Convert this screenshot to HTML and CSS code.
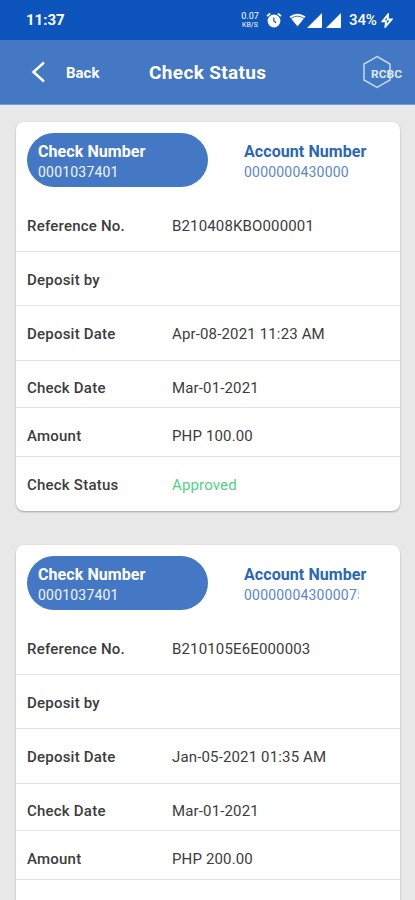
FILE: index.html
```html
<!DOCTYPE html>
<html lang="en">
<head>
	<meta charset="UTF-8">
	<title>Check Status</title>
	<link rel="stylesheet" href="styles.css">
</head>
<body>
	<div class="status-bar">
		<span class="clock">11:37</span>
		<div class="speed"><span class="speed-num">0.07</span><span class="speed-unit">KB/S</span></div>
		<svg class="alarm" width="16" height="16" viewBox="0 0 16 16">
			<circle cx="8" cy="9" r="6.4" fill="#fff"/>
			<path d="M1 4.2L4.2 1.5M15 4.2L11.8 1.5" stroke="#fff" stroke-width="1.7"/>
			<path d="M7.8 5.5V9l2.3 1.8" fill="none" stroke="#0d55bd" stroke-width="1.2"/>
		</svg>
		<svg class="wifi" width="17" height="14" viewBox="0 0 17 14">
			<path d="M.5 3.500Q8.500-2 16.500 3.500L8.500 13.500z" fill="#fff"/>
			<path d="M2 5.400Q8.500 .9 15 5.400" fill="none" stroke="#0d55bd" stroke-width=".8"/>
		</svg>
		<svg class="signal" width="15" height="15" viewBox="0 0 15 15"><path d="M15 0v15H0z" fill="#fff"/></svg>
		<svg class="signal2" width="15" height="15" viewBox="0 0 15 15"><path d="M15 0v15H0z" fill="#fff"/></svg>
		<span class="battery">34%</span>
		<svg class="bolt" width="12" height="15" viewBox="0 0 12 15">
			<path d="M7 1.500L1.500 8.300H5L4.500 13.500L10.500 6.500H6.700z" fill="none" stroke="#fff" stroke-width="1.900"/>
		</svg>
	</div>
	<div class="header">
		<svg class="arrow" width="14" height="22" viewBox="0 0 14 22">
			<path d="M13 1.500L2.500 11l10.500 9.500" fill="none" stroke="#fff" stroke-width="2.500"/>
		</svg>
		<span class="back">Back</span>
		<h1 class="title">Check Status</h1>
		<svg class="logo" width="41" height="34" viewBox="0 0 41 34">
			<path d="M15 1.500L28 9v16L15 32.500L2 25V9z" fill="none" stroke="#c3d7f4" stroke-width="1.500"/>
			<text x="9" y="23" textLength="31" lengthAdjust="spacingAndGlyphs" class="logo-text">RCBC</text>
		</svg>
	</div>
	<div class="content">
		<!-- first check -->
		<div class="card">
			<div class="tabs">
				<div class="tab active">
					<p class="tab-name">Check Number</p>
					<p class="tab-num">0001037401</p>
				</div>
				<div class="tab">
					<p class="tab-name">Account Number</p>
					<p class="tab-num">0000000430000</p>
				</div>
			</div>
			<ul class="details">
				<li class="ref"><b>Reference No.</b><span>B210408KBO000001</span></li>
				<li class="by"><b>Deposit by</b><span></span></li>
				<li class="deposit"><b>Deposit Date</b><span>Apr-08-2021 11:23 AM</span></li>
				<li class="date"><b>Check Date</b><span>Mar-01-2021</span></li>
				<li class="amount"><b>Amount</b><span>PHP 100.00</span></li>
				<li class="status"><b>Check Status</b><span class="approved">Approved</span></li>
			</ul>
		</div>
		<!-- second check -->
		<div class="card">
			<div class="tabs">
				<div class="tab active">
					<p class="tab-name">Check Number</p>
					<p class="tab-num">0001037401</p>
				</div>
				<div class="tab">
					<p class="tab-name">Account Number</p>
					<p class="tab-num">000000043000075</p>
				</div>
			</div>
			<ul class="details">
				<li class="ref"><b>Reference No.</b><span>B210105E6E000003</span></li>
				<li class="by"><b>Deposit by</b><span></span></li>
				<li class="deposit"><b>Deposit Date</b><span>Jan-05-2021 01:35 AM</span></li>
				<li class="date"><b>Check Date</b><span>Mar-01-2021</span></li>
				<li class="amount"><b>Amount</b><span>PHP 200.00</span></li>
				<li class="status"></li>
			</ul>
		</div>
	</div>
</body>
</html>
```
FILE: styles.css
```css
*{
	margin:0;
	padding:0;
	list-style:none;
	box-sizing:border-box;
}
body{
	height:900px;
	overflow:hidden;
	background:#e8e8e8;
	font-family:Roboto,"Liberation Sans",sans-serif;
	color:#3c3c3c;
}
svg{
	display:block;
	flex:none;
}
/*---------------- status bar ----------------*/
.status-bar{
	height:40px;
	padding-left:26px;
	display:flex;
	align-items:center;
	background:#0d55bd;
	color:#fff;
}
.clock{
	width:215px;
	font-size:15px;
	font-weight:700;
}
.speed{
	width:18px;
	display:flex;
	flex-direction:column;
	align-items:center;
}
.speed-num{
	font-size:9px;
	line-height:10px;
}
.speed-unit{
	font-size:7px;
	line-height:8px;
}
.alarm{
	margin-left:7px;
}
.wifi{
	margin-left:7px;
}
.signal{
	margin-left:1px;
}
.signal2{
	margin-left:4px;
}
.battery{
	width:29px;
	margin-left:8px;
	font-size:15px;
	font-weight:500;
	white-space:nowrap;
	letter-spacing:-.1px;
}
.bolt{
	margin-left:3px;
}
/*---------------- header ----------------*/
.header{
	height:65px;
	padding-left:31px;
	display:flex;
	align-items:center;
	background:#4478c2;
	border-bottom:1px solid #7d9ccb;
	color:#fff;
}
.back{
	width:83px;
	margin-left:21px;
	padding-top:1px;
	font-size:15px;
	font-weight:700;
}
.title{
	width:213px;
	padding-top:1px;
	font-size:19px;
	font-weight:700;
	letter-spacing:.35px;
}
.logo-text{
	font-size:11px;
	font-weight:700;
	fill:#dce9fb;
}
/*---------------- cards ----------------*/
.content{
	height:795px;
	padding:17px 15px 0 16px;
	overflow:hidden;
}
.card{
	height:389px;
	margin-bottom:34px;
	padding-top:11px;
	background:#fff;
	border-radius:8px;
	box-shadow:0 1px 2px rgba(0,0,0,.3);
}
.tabs{
	height:66px;
	padding-left:11px;
	display:flex;
	gap:25px;
}
.tab{
	width:138px;
	height:54px;
	padding:9px 0 0 11px;
	color:#2b67b8;
}
.active{
	width:181px;
	background:#4478c4;
	border-radius:27px;
	color:#fff;
}
.tab-name{
	font-size:16px;
	font-weight:700;
	line-height:20px;
	letter-spacing:.08px;
	white-space:nowrap;
}
.tab-num{
	width:115px;
	overflow:hidden;
	font-size:14px;
	line-height:20px;
	letter-spacing:.2px;
	color:#5c86cf;
}
.active .tab-num{
	color:#f0f5fd;
}
/*---------------- details ----------------*/
.details li{
	height:54px;
	padding:18px 0 0 11px;
	display:flex;
	border-bottom:1px solid #e4e4e4;
	font-size:15px;
	line-height:20px;
}
.details b{
	width:145px;
	font-weight:500;
	letter-spacing:.22px;
}
.details span{
	white-space:nowrap;
	letter-spacing:.15px;
}
.details .ref{
	height:53px;
	padding-top:17px;
}
.details .deposit{
	height:55px;
}
.details .date{
	height:47px;
	padding-top:17px;
}
.details .amount{
	height:49px;
}
.details .status{
	border:none;
}
.details .approved{
	color:#4fd384;
}
```
